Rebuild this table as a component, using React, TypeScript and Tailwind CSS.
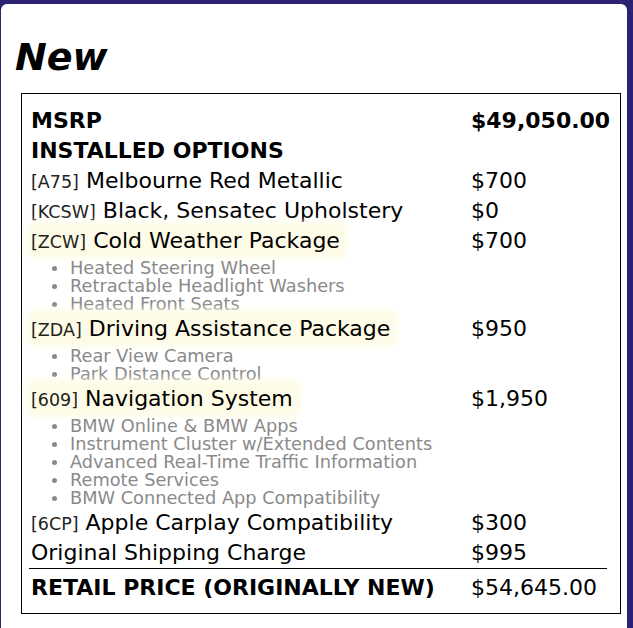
const items = [
  { code: 'A75', name: 'Melbourne Red Metallic', price: '$700' },
  { code: 'KCSW', name: 'Black, Sensatec Upholstery', price: '$0' },
  {
    code: 'ZCW',
    name: 'Cold Weather Package',
    price: '$700',
    features: ['Heated Steering Wheel', 'Retractable Headlight Washers', 'Heated Front Seats']
  },
  {
    code: 'ZDA',
    name: 'Driving Assistance Package',
    price: '$950',
    features: ['Rear View Camera', 'Park Distance Control']
  },
  {
    code: '609',
    name: 'Navigation System',
    price: '$1,950',
    features: [
      'BMW Online & BMW Apps',
      'Instrument Cluster w/Extended Contents',
      'Advanced Real-Time Traffic Information',
      'Remote Services',
      'BMW Connected App Compatibility'
    ]
  },
  { code: '6CP', name: 'Apple Carplay Compatibility', price: '$300' }
]

function Row({ label, price, bold = false }: { label: React.ReactNode; price: string; bold?: boolean }) {
  return (
    <div className={`flex h-[30px] items-center ${bold ? 'font-bold' : ''}`}>
      <div className="min-w-0 flex-1 whitespace-nowrap">{label}</div>
      <div className="w-[136px] whitespace-nowrap">{price}</div>
    </div>
  )
}

export default function App() {
  return (
    <div className="min-h-screen bg-[#2b2271] pl-px pr-[6px] pt-1 font-['DejaVu_Sans',sans-serif] text-black">
      <div className="h-[624px] rounded-t-md bg-white px-[14px]">
        <h1 className="pt-[31px] text-[38px] font-bold italic leading-[44px]">New</h1>
        <div className="ml-[6px] mt-[14px] w-[600px] border border-black pb-[11px] pl-[9px] pr-[13px] pt-[11px] text-[22px]">
          <Row label="MSRP" price="$49,050.00" bold />
          <Row label="INSTALLED OPTIONS" price="" bold />
          {items.map((item) => (
            <div key={item.code}>
              <Row
                price={item.price}
                label={
                  <span className={item.features ? 'rounded bg-[#fefce6] py-[2px] pr-[3px] shadow-[0_0_7px_4px_#fefce6]' : ''}>
                    <span className="text-[17.5px] text-[#222]">[{item.code}]</span> {item.name}
                  </span>
                }
              />
              {item.features && (
                <ul className="pt-1 text-[17.75px] leading-[18px] text-[#8a8a8a]">
                  {item.features.map((feature) => (
                    <li key={feature} className="flex h-[18px] items-center">
                      <span className="ml-[21px] mr-[13px] h-[5px] w-[5px] shrink-0 rounded-full bg-[#8a8a8a]" />
                      {feature}
                    </li>
                  ))}
                </ul>
              )}
            </div>
          ))}
          <Row label="Original Shipping Charge" price="$995" />
          <div className="-ml-[2px] mt-px border-t border-black pl-[2px] pt-[3px]">
            <Row label={<span className="font-bold">RETAIL PRICE (ORIGINALLY NEW)</span>} price="$54,645.00" />
          </div>
        </div>
      </div>
    </div>
  )
}
